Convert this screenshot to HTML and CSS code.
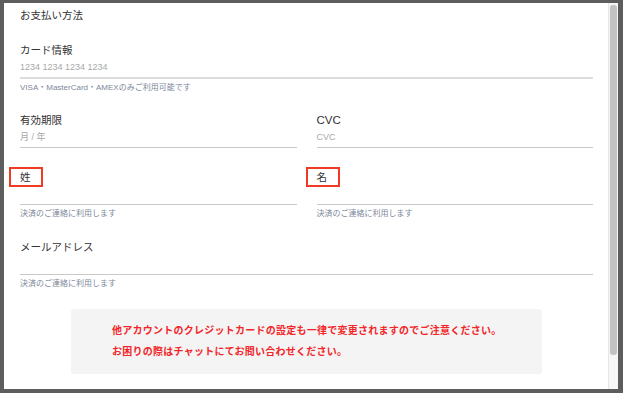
FILE: index.html
```html
<!DOCTYPE html>
<html lang="ja">
<head>
    <meta charset="UTF-8" />
    <title>お支払い方法</title>
    <link rel="stylesheet" href="styles.css">
</head>
<body>
<div class="modal">
    <div class="content">
        <h2 class="title">お支払い方法</h2>

        <!-- カード番号 -->
        <div class="field">
            <div class="label">カード情報</div>
            <div class="input first">1234 1234 1234 1234</div>
            <div class="help">VISA・MasterCard・AMEXのみご利用可能です</div>
        </div>

        <div class="row nohelp">
            <div class="field">
                <div class="label">有効期限</div>
                <div class="input">月 / 年</div>
            </div>
            <div class="field">
                <div class="label latin">CVC</div>
                <div class="input">CVC</div>
            </div>
        </div>

        <div class="row">
            <div class="field">
                <div class="label"><span class="marked">姓<span class="mark"></span></span></div>
                <div class="input"></div>
                <div class="help">決済のご連絡に利用します</div>
            </div>
            <div class="field">
                <div class="label"><span class="marked">名<span class="mark"></span></span></div>
                <div class="input"></div>
                <div class="help">決済のご連絡に利用します</div>
            </div>
        </div>

        <div class="field">
            <div class="label">メールアドレス</div>
            <div class="input"></div>
            <div class="help">決済のご連絡に利用します</div>
        </div>

        <div class="notice">
            <p>他アカウントのクレジットカードの設定も一律で変更されますのでご注意ください。</p>
            <p>お困りの際はチャットにてお問い合わせください。</p>
        </div>
    </div>
    <div class="scrollbar"><div class="thumb"></div></div>
</div>
</body>
</html>
```

FILE: styles.css
```css
body {
    margin: 0;
    background-color: #5d5d5d;
    font-family: "Liberation Sans", "Noto Sans CJK JP", sans-serif;
    color: #333;
}

.modal {
    margin: 3px 5px 0 4px;
    height: 386px;
    background-color: #fff;
    display: flex;
    overflow: hidden;
}

.content {
    flex: 1;
    padding: 4px 15px 0 16px;
}

.title {
    margin: 0;
    font-size: 10.5px;
    font-weight: normal;
    line-height: 16px;
}

.field {
    margin-top: 19px;
}

.row {
    display: grid;
    grid-template-columns: 1fr 1fr;
    column-gap: 20px;
}

.row .field {
    margin-top: 18px;
}

.row.nohelp {
    margin-bottom: 3px;
}

.label {
    font-size: 10.5px;
    line-height: 16px;
}

.label.latin {
    font-size: 11.5px;
}

.marked {
    position: relative;
    display: inline-block;
}

.mark {
    position: absolute;
    left: -11px;
    top: -2px;
    width: 34px;
    height: 20px;
    box-sizing: border-box;
    border: 2px solid #f03a24;
}

.input {
    margin-top: 2px;
    padding: 1px 0 3px;
    height: 13px;
    font-size: 9px;
    line-height: 13px;
    color: #a8a8a8;
    border-bottom: 1px solid #c9c9c9;
}

.input.first {
    border-bottom: 2px solid #dcdcdc;
}

.help {
    margin-top: 3px;
    font-size: 8px;
    line-height: 12px;
    color: #7c879a;
}

.notice {
    width: 471px;
    margin: 19px auto 0;
    box-sizing: border-box;
    padding: 11px 0 12px 41px;
    background-color: #f4f4f4;
    border-radius: 3px;
}

.notice p {
    margin: 0;
    font-size: 10px;
    font-weight: bold;
    letter-spacing: 0.25px;
    line-height: 21px;
    color: #f2262a;
    white-space: nowrap;
}

.scrollbar {
    width: 7px;
    padding: 2px 1px 0 1px;
    background-color: #f6f6f6;
    border-left: 1px solid #e6e6e6;
}

.thumb {
    height: 350px;
    background-color: #c2c2c2;
    border-radius: 3px;
}
```
